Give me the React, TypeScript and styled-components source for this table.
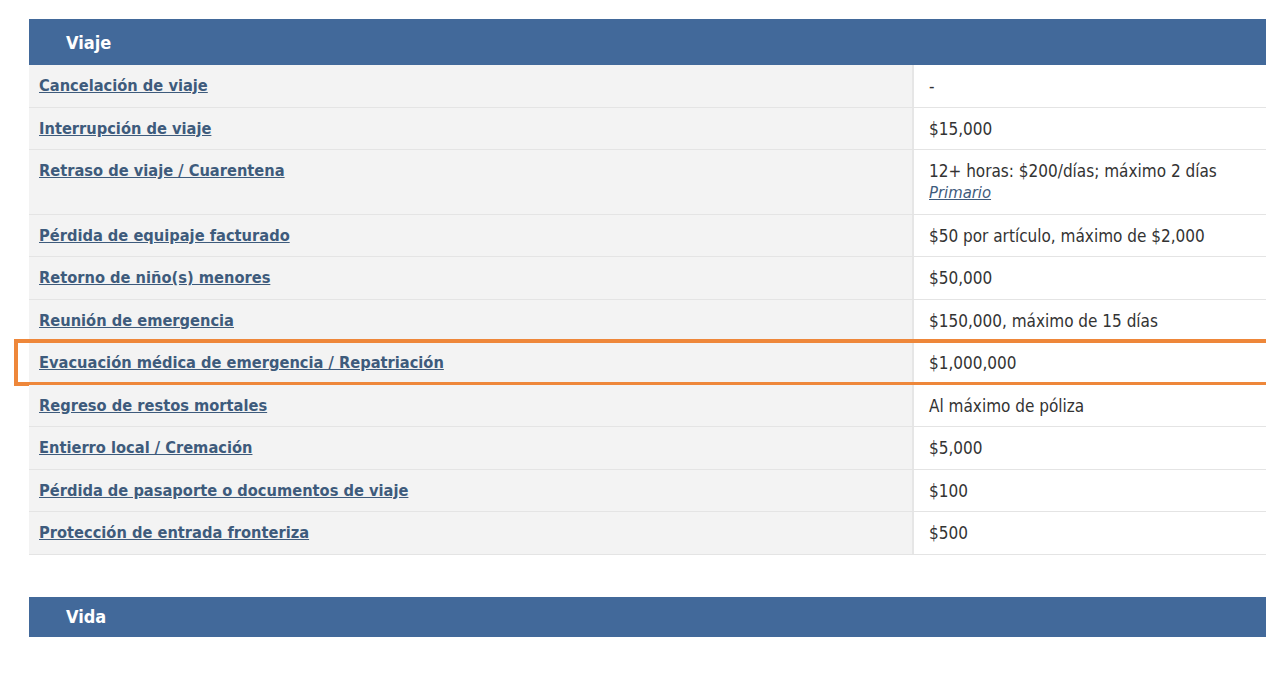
import { createGlobalStyle, styled } from 'styled-components';

const GlobalStyle = createGlobalStyle`
  body {
    margin: 0;
    background: #ffffff;
    font-family: "DejaVu Sans Condensed", "DejaVu Sans", sans-serif;
    overflow: hidden;
  }
`;

const Page = styled.div`
  padding: 19px 0 0 29px;
`;

const Section = styled.section`
  margin-bottom: 42px;
`;

const SectionHeader = styled.div<{ $height: number }>`
  background: #42699a;
  color: #ffffff;
  font-weight: bold;
  font-size: 18px;
  height: ${(p) => p.$height}px;
  display: flex;
  align-items: center;
  padding-left: 37px;
`;

const Row = styled.div<{ $highlight?: boolean }>`
  position: relative;
  display: grid;
  grid-template-columns: 885px 1fr;
  border-bottom: 1px solid #e4e4e4;

  ${(p) =>
    p.$highlight &&
    `
    &::after {
      content: '';
      position: absolute;
      left: -15px;
      right: -10px;
      top: -3px;
      bottom: -2px;
      border: 4px solid #ee873a;
      pointer-events: none;
    }
  `}
`;

const LabelCell = styled.div`
  background: #f3f3f3;
  border-right: 2px solid #e6e6e6;
  padding: 10px 10px 9.5px;
  line-height: 22px;
`;

const ValueCell = styled.div`
  background: #ffffff;
  padding: 10px 15px 9.5px;
  line-height: 22px;
  font-size: 17px;
  color: #333333;
`;

const Label = styled.a`
  color: #3e5b7c;
  font-weight: bold;
  font-size: 16.3px;
  text-decoration: underline;
`;

const Note = styled.a`
  display: block;
  color: #3e5b7c;
  font-style: italic;
  font-size: 16.5px;
  text-decoration: underline;
`;

type Item = { label: string; value: string; note?: string; highlight?: boolean };

const items: Item[] = [
  { label: 'Cancelación de viaje', value: '-' },
  { label: 'Interrupción de viaje', value: '$15,000' },
  {
    label: 'Retraso de viaje / Cuarentena',
    value: '12+ horas: $200/días; máximo 2 días',
    note: 'Primario',
  },
  { label: 'Pérdida de equipaje facturado', value: '$50 por artículo, máximo de $2,000' },
  { label: 'Retorno de niño(s) menores', value: '$50,000' },
  { label: 'Reunión de emergencia', value: '$150,000, máximo de 15 días' },
  {
    label: 'Evacuación médica de emergencia / Repatriación',
    value: '$1,000,000',
    highlight: true,
  },
  { label: 'Regreso de restos mortales', value: 'Al máximo de póliza' },
  { label: 'Entierro local / Cremación', value: '$5,000' },
  { label: 'Pérdida de pasaporte o documentos de viaje', value: '$100' },
  { label: 'Protección de entrada fronteriza', value: '$500' },
];

const App = () => {
  return (
    <Page>
      <GlobalStyle />
      <Section>
        <SectionHeader $height={46}>Viaje</SectionHeader>
        {items.map((item) => (
          <Row key={item.label} $highlight={item.highlight}>
            <LabelCell>
              <Label href="#">{item.label}</Label>
            </LabelCell>
            <ValueCell>
              {item.value}
              {item.note && <Note href="#">{item.note}</Note>}
            </ValueCell>
          </Row>
        ))}
      </Section>
      <Section>
        <SectionHeader $height={40}>Vida</SectionHeader>
      </Section>
    </Page>
  );
};

export default App;
